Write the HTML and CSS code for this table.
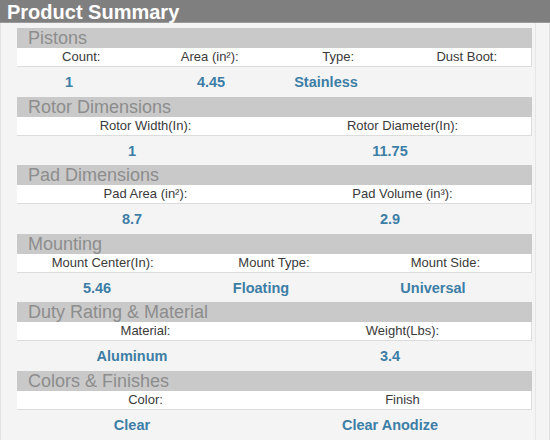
FILE: index.html
```html
<!DOCTYPE html>
<html>
<head>
<meta charset="utf-8">
<link rel="stylesheet" href="styles.css">
</head>
<body>
<div class="summary">
  <div class="summary-head">Product Summary</div>
  <div class="panel">
    <div class="panel-inner">
      <div class="section">
        <div class="sec-title">Pistons</div>
        <div class="labels cols4"><span>Count:</span><span>Area (in²):</span><span>Type:</span><span>Dust Boot:</span></div>
        <div class="values vals-pistons"><span>1</span><span>4.45</span><span>Stainless</span><span></span></div>
      </div>
      <div class="section">
        <div class="sec-title">Rotor Dimensions</div>
        <div class="labels cols2"><span>Rotor Width(In):</span><span>Rotor Diameter(In):</span></div>
        <div class="values vals-2"><span>1</span><span>11.75</span></div>
      </div>
      <div class="section">
        <div class="sec-title">Pad Dimensions</div>
        <div class="labels cols2"><span>Pad Area (in²):</span><span>Pad Volume (in³):</span></div>
        <div class="values vals-2"><span>8.7</span><span>2.9</span></div>
      </div>
      <div class="section">
        <div class="sec-title">Mounting</div>
        <div class="labels cols3"><span>Mount Center(In):</span><span>Mount Type:</span><span>Mount Side:</span></div>
        <div class="values vals-mount"><span>5.46</span><span>Floating</span><span>Universal</span></div>
      </div>
      <div class="section">
        <div class="sec-title">Duty Rating &amp; Material</div>
        <div class="labels cols2"><span>Material:</span><span>Weight(Lbs):</span></div>
        <div class="values vals-2"><span>Aluminum</span><span>3.4</span></div>
      </div>
      <div class="section">
        <div class="sec-title">Colors &amp; Finishes</div>
        <div class="labels cols2"><span>Color:</span><span>Finish</span></div>
        <div class="values vals-2"><span>Clear</span><span>Clear Anodize</span></div>
      </div>
    </div>
  </div>
</div>
</body>
</html>
```

FILE: styles.css
```css
html, body {
  margin: 0;
  padding: 0;
  background: #ffffff;
  font-family: "Liberation Sans", Arial, sans-serif;
}

.summary {
  width: 550px;
}

.summary-head {
  height: 23px;
  line-height: 24px;
  background: #7f7f7f;
  color: #ffffff;
  font-weight: bold;
  font-size: 20px;
  padding-left: 7px;
  border-bottom: 1px solid #9a9a9a;
  box-sizing: border-box;
}

.panel {
  width: 548px;
  background: #f4f4f4;
  border: 1px solid #e2e2e2;
  border-top: none;
}

.panel-inner {
  width: 535px;
  border-right: 1px solid #e6e6e6;
  box-sizing: border-box;
  padding: 5px 0 0 16px;
  display: flex;
  flex-direction: column;
}

.section {
  width: 515px;
  display: flex;
  flex-direction: column;
}

.sec-title {
  height: 20px;
  line-height: 21px;
  background: #c9c9c9;
  color: #8d8d8d;
  font-size: 18px;
  padding-left: 11px;
  white-space: nowrap;
  overflow: hidden;
}

.labels {
  display: grid;
  height: 18px;
  line-height: 18px;
  background: #ffffff;
  border-bottom: 1px solid #dcdcdc;
  border-right: 1px solid #dcdcdc;
  font-size: 13px;
  color: #3a3a3a;
}

.labels span,
.values span {
  text-align: center;
  white-space: nowrap;
}

.values span {
  justify-self: center;
}

.cols2 { grid-template-columns: 1fr 1fr; }
.cols3 { grid-template-columns: 1fr 1fr 1fr; }
.cols4 { grid-template-columns: 1fr 1fr 1fr 1fr; }

.values {
  display: grid;
  height: 29.6px;
  line-height: 30px;
  font-size: 14.5px;
  font-weight: bold;
  color: #3d7ea6;
}

.vals-2 { grid-template-columns: 230px 286px; }
.vals-pistons { grid-template-columns: 104px 180px 50px 1fr; }
.vals-mount { grid-template-columns: 160px 168px 176px 1fr; }
```
